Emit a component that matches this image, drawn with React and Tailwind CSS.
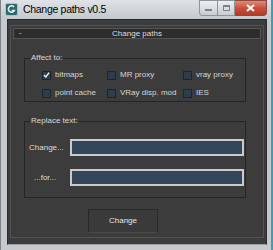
import React from "react";

const OPTIONS = [
  [
    { label: "bitmaps", checked: true },
    { label: "MR proxy" },
    { label: "vray proxy" },
  ],
  [
    { label: "point cache" },
    { label: "VRay disp. mod" },
    { label: "IES" },
  ],
];

const COLS = ["w-[65px]", "w-[76px]", "w-[60px]"];

function Checkbox({ checked }) {
  return (
    <div className="w-[9px] h-[9px] bg-[#2f3c4c] border border-[#1f252c] flex items-center justify-center shrink-0">
      {checked && (
        <svg width="8" height="8" viewBox="0 0 8 8">
          <path d="M1 4 L3.2 6.2 L7 1.2" stroke="#f2f2f2" strokeWidth="1.6" fill="none" />
        </svg>
      )}
    </div>
  );
}

function Group({ title, className, children }) {
  return (
    <div className={`relative border border-[#262626] ${className}`}>
      {/* titre posé sur la bordure */}
      <span className="absolute -top-[6px] left-[5px] px-[1px] bg-[#3c3c3c] leading-[10px] text-[#d8d8d8]">
        {title}
      </span>
      {children}
    </div>
  );
}

function Field({ label, labelPad, className }) {
  return (
    <div className={`flex items-center h-[17px] ${className}`}>
      <span className={`w-[41px] ${labelPad} text-[#dcdcdc]`}>{label}</span>
      <div className="w-[174px] h-[17px] bg-[#34475a] border-2 border-[#c9cbcd]" />
    </div>
  );
}

export default function App() {
  return (
    <div
      className="w-[273px] h-[250px] flex flex-col bg-[#c6cacf] border-l border-[#7d8388] border-r-2 border-r-[#3a9fb5] overflow-hidden"
      style={{ fontFamily: '"Liberation Sans", Arial, sans-serif' }}
    >
      {/* Barre de titre */}
      <div className="h-[19px] flex items-start bg-gradient-to-b from-[#dfe3e7] to-[#c3c8cd] relative">
        <div className="mt-[3px] ml-[4px] w-[13px] h-[13px] rounded-[2px] bg-[#2c6a72] border border-[#a8c4c8] flex items-center justify-center">
          <svg width="9" height="9" viewBox="0 0 9 9">
            <path d="M7 2 A3.2 3.2 0 1 0 7.4 5.5 L4.8 5.5" stroke="#e8f2f2" strokeWidth="1.5" fill="none" />
          </svg>
        </div>
        <span className="ml-[5px] mt-[3px] text-[10.5px] leading-[13px] text-black tracking-[-0.3px]">
          Change paths v0.5
        </span>
        <div className="ml-auto flex h-[16px] mr-[4px]">
          <div className="w-[18px] border border-[#8f959b] border-r-0 rounded-bl-[4px] bg-gradient-to-b from-[#eef0f2] to-[#c9cdd2] flex items-end justify-center pb-[4px]">
            <div className="w-[7px] h-[2px] bg-[#7c8288]" />
          </div>
          <div className="w-[18px] border border-[#8f959b] bg-gradient-to-b from-[#eef0f2] to-[#c9cdd2] flex items-center justify-center">
            <div className="w-[7px] h-[6px] border border-[#7c8288] border-t-2" />
          </div>
          <div className="w-[32px] border border-[#8a4a40] border-l-0 rounded-br-[4px] bg-gradient-to-b from-[#e08a7c] via-[#c9503c] to-[#b23a26] flex items-center justify-center">
            <svg width="9" height="8" viewBox="0 0 9 8">
              <path d="M1 1 L8 7 M8 1 L1 7" stroke="#ffffff" strokeWidth="2" />
            </svg>
          </div>
        </div>
      </div>

      {/* Contenu */}
      <div className="flex-1 ml-[6px] mr-[4px] mb-[5px] bg-[#3c3c3c] border border-[#2b2b2b] border-b-[#9aa0a5] text-[8px] leading-[10px]">
        <div className="mt-[5px] mx-[2px] h-[213px] border border-[#525252] flex flex-col">
          {/* En-tête du rollout */}
          <div className="mt-[2px] mx-[2px] h-[11px] bg-[#2d2d2d] border border-[#555555] flex items-center relative">
            <span className="absolute left-[5px] top-0 leading-[8px] text-[#dddddd]">-</span>
            <span className="flex-1 text-center text-[#dddddd]">Change paths</span>
          </div>

          <Group title="Affect to:" className="mt-[19px] ml-[13px] w-[222px] pt-[11px] pb-[3px] pl-[17px]">
            <div className="flex flex-col gap-[8px]">
              {OPTIONS.map((row, r) => (
                <div key={r} className="flex">
                  {row.map((opt, c) => (
                    <div key={opt.label} className={`flex items-center gap-[4px] ${COLS[c]}`}>
                      <Checkbox checked={opt.checked} />
                      <span className="text-[#d6d6d6] whitespace-nowrap">{opt.label}</span>
                    </div>
                  ))}
                </div>
              ))}
            </div>
          </Group>

          <Group title="Replace text:" className="mt-[19px] ml-[13px] w-[222px] pt-[17px] pb-[11px] pl-[4px]">
            <Field label="Change..." labelPad="" />
            <Field label="...for..." labelPad="pl-[5px]" className="mt-[13px]" />
          </Group>

          <button className="mt-[11px] ml-[77px] w-[70px] h-[24px] bg-[#3a3a3a] border border-[#2a2a2a] border-b-[#4a4a4a] text-[#e2e2e2] text-[8px]">
            Change
          </button>
        </div>
      </div>
    </div>
  );
}
